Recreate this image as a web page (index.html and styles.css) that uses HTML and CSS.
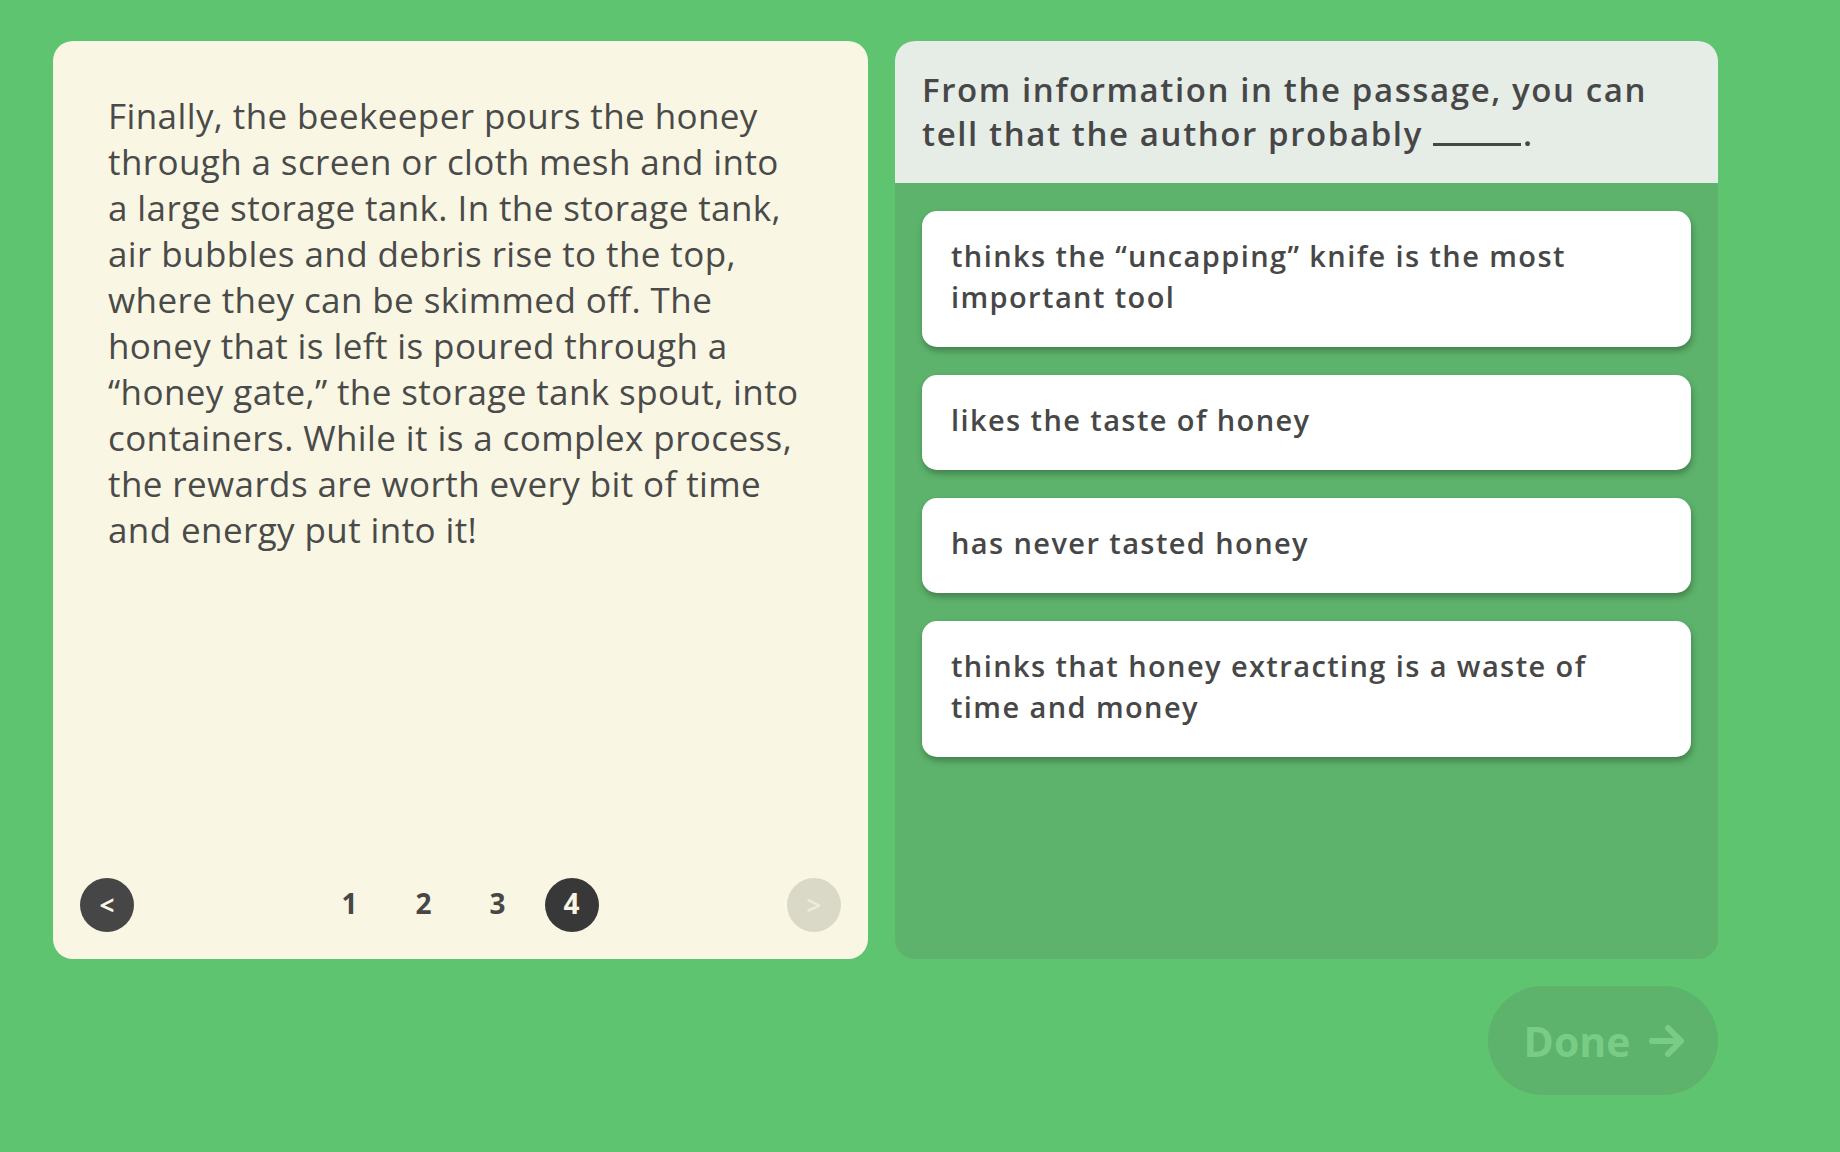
FILE: index.html
```html
<!DOCTYPE html>
<html lang="en">
<head>
<meta charset="utf-8">
<title>Reading question</title>
<link rel="stylesheet" href="styles.css">
</head>
<body>
<main class="page">
  <div class="columns">
    <section class="passage-card">
      <p class="passage">Finally, the beekeeper pours the honey<br>through a screen or cloth mesh and into<br>a large storage tank. In the storage tank,<br>air bubbles and debris rise to the top,<br>where they can be skimmed off. The<br>honey that is left is poured through a<br>“honey gate,” the storage tank spout, into<br>containers. While it is a complex process,<br>the rewards are worth every bit of time<br>and energy put into it!</p>
      <nav class="pager">
        <button class="pager-arrow prev" type="button">&lt;</button>
        <div class="pager-pages">
          <span class="page-num">1</span>
          <span class="page-num">2</span>
          <span class="page-num">3</span>
          <span class="page-num current">4</span>
        </div>
        <button class="pager-arrow next disabled" type="button">&gt;</button>
      </nav>
    </section>
    <section class="question-panel">
      <header class="question">From information in the passage, you can<br>tell that the author probably <span class="blank"></span>.</header>
      <div class="options">
        <div class="option">thinks the “uncapping” knife is the most<br>important tool</div>
        <div class="option">likes the taste of honey</div>
        <div class="option">has never tasted honey</div>
        <div class="option">thinks that honey extracting is a waste of<br>time and money</div>
      </div>
    </section>
  </div>
  <div class="footer">
    <button class="done" type="button">Done <svg class="done-arrow" width="38" height="34" viewBox="0 0 38 34"><path d="M4 17 H33 M20 4 L33 17 L20 30" fill="none" stroke="currentColor" stroke-width="6" stroke-linecap="round" stroke-linejoin="round"/></svg></button>
  </div>
</main>
</body>
</html>
```
FILE: styles.css
```css
* { box-sizing: border-box; }
html, body {
  margin: 0;
  padding: 0;
}
body {
  background: #5ec46f;
  width: 1840px;
  height: 1152px;
  overflow: hidden;
  font-family: "Open Sans", "Noto Sans", sans-serif;
  color: #474747;
}
.page {
  width: 1718px;
  padding: 41px 0 0 53px;
}
.columns {
  display: flex;
  gap: 27px;
  height: 918px;
}
.passage-card {
  width: 815px;
  background: #f9f7e3;
  border-radius: 20px;
  display: flex;
  flex-direction: column;
  padding: 52px 27px 27px 27px;
}
.passage {
  flex: 1;
  margin: 0;
  padding-left: 28px;
  font-size: 35px;
  line-height: 46px;
  letter-spacing: 0.4px;
  font-weight: 400;
  white-space: nowrap;
  color: #4a4a4a;
}
.pager {
  display: grid;
  grid-template-columns: 54px 1fr 54px;
  align-items: center;
}
.pager-arrow {
  width: 54px;
  height: 54px;
  border-radius: 50%;
  border: none;
  padding: 0;
  font-family: "Open Sans", sans-serif;
  font-weight: 700;
  font-size: 26px;
  line-height: 54px;
  text-align: center;
}
.pager-arrow.prev {
  background: #464646;
  color: #f9f7e3;
}
.pager-arrow.disabled {
  background: #dad9c8;
  color: #ebeadb;
}
.pager-pages {
  display: flex;
  justify-content: center;
  gap: 20px;
}
.page-num {
  width: 54px;
  height: 54px;
  border-radius: 50%;
  display: flex;
  align-items: center;
  justify-content: center;
  font-weight: 700;
  font-size: 28px;
  line-height: 1;
  padding-bottom: 4px;
  color: #474747;
}
.page-num.current {
  background: #383838;
  color: #f9f7e3;
}
.question-panel {
  width: 823px;
  background: #5db36b;
  border-radius: 20px;
  overflow: hidden;
  display: flex;
  flex-direction: column;
}
.question {
  background: #e6ede7;
  padding: 27px 27px;
  font-size: 33px;
  line-height: 44px;
  font-weight: 600;
  letter-spacing: 1.6px;
  white-space: nowrap;
  color: #474747;
}
.blank {
  display: inline-block;
  width: 88px;
  height: 3px;
  background: #474747;
  vertical-align: baseline;
  margin-right: 2px;
}
.options {
  display: flex;
  flex-direction: column;
  gap: 28px;
  padding: 28px 27px;
}
.option {
  background: #ffffff;
  border-radius: 15px;
  padding: 24px 29px 30px 29px;
  font-size: 29px;
  line-height: 41px;
  font-weight: 600;
  letter-spacing: 1.4px;
  white-space: nowrap;
  color: #474747;
  box-shadow: 1px 4px 6px rgba(0, 0, 0, 0.28);
}
.footer {
  display: flex;
  justify-content: flex-end;
  padding-top: 27px;
}
.done {
  width: 230px;
  height: 109px;
  border-radius: 55px;
  border: none;
  background: #5db36b;
  color: #79cc85;
  font-family: "Open Sans", sans-serif;
  font-weight: 700;
  font-size: 41px;
  display: flex;
  align-items: center;
  justify-content: center;
  gap: 18px;
  padding: 0 0 0 4px;
}
.done-arrow {
  display: block;
}
```
